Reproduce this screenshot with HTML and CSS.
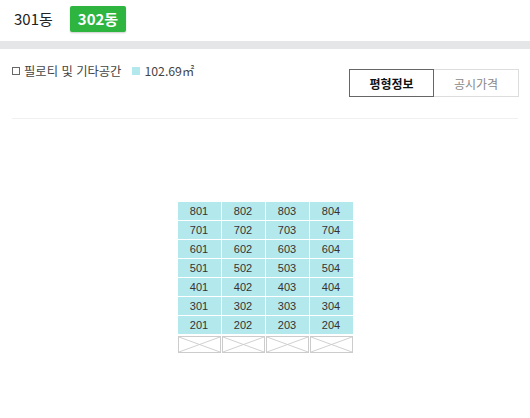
FILE: index.html
```html
<!DOCTYPE html>
<html lang="ko">
<head>
<meta charset="utf-8">
<link rel="stylesheet" href="styles.css">
</head>
<body>
<div class="tabs">
  <span class="tab">301동</span>
  <span class="tab active">302동</span>
</div>
<div class="sep"></div>
<div class="info">
  <div class="legend">
    <span class="chk"></span>
    <span class="ltxt">필로티 및 기타공간</span>
    <span class="sq"></span>
    <span class="ltxt">102.69㎡</span>
  </div>
  <div class="toggle">
    <button class="tbtn on">평형정보</button>
    <button class="tbtn">공시가격</button>
  </div>
</div>
<div class="line"></div>
<div class="chart">
  <div class="grid">
    <div class="c">801</div><div class="c">802</div><div class="c">803</div><div class="c">804</div>
    <div class="c">701</div><div class="c">702</div><div class="c">703</div><div class="c">704</div>
    <div class="c">601</div><div class="c">602</div><div class="c">603</div><div class="c">604</div>
    <div class="c">501</div><div class="c">502</div><div class="c">503</div><div class="c">504</div>
    <div class="c">401</div><div class="c">402</div><div class="c">403</div><div class="c">404</div>
    <div class="c">301</div><div class="c">302</div><div class="c">303</div><div class="c">304</div>
    <div class="c">201</div><div class="c">202</div><div class="c">203</div><div class="c">204</div>
    <div class="x"><svg viewBox="0 0 43 17" preserveAspectRatio="none"><path d="M0 0L43 17M43 0L0 17"/></svg></div>
    <div class="x"><svg viewBox="0 0 43 17" preserveAspectRatio="none"><path d="M0 0L43 17M43 0L0 17"/></svg></div>
    <div class="x"><svg viewBox="0 0 43 17" preserveAspectRatio="none"><path d="M0 0L43 17M43 0L0 17"/></svg></div>
    <div class="x"><svg viewBox="0 0 43 17" preserveAspectRatio="none"><path d="M0 0L43 17M43 0L0 17"/></svg></div>
  </div>
</div>
</body>
</html>
```
FILE: styles.css
```css
* { box-sizing: border-box; }
body {
  margin: 0;
  background: #fff;
  font-family: "Noto Sans CJK KR", "Noto Sans", sans-serif;
  color: #333;
}
.tabs {
  display: flex;
  align-items: center;
  gap: 17px;
  height: 41px;
  padding: 0 0 4px 14px;
}
.tab {
  font-size: 15px;
  line-height: 20px;
  color: #222;
}
.tab.active {
  background: #2db53f;
  color: #fff;
  font-weight: bold;
  padding: 3px 8px;
  border-radius: 2px;
  box-shadow: 0 1px 2px rgba(0,0,0,0.2);
}
.sep {
  height: 8px;
  background: #e5e6e7;
}
.info {
  display: flex;
  justify-content: space-between;
  align-items: flex-start;
  padding: 12px 11px 0 12px;
  height: 69px;
}
.legend {
  display: flex;
  align-items: center;
  gap: 4px;
  margin-top: 2px;
  font-size: 12.3px;
  line-height: 16px;
  color: #444;
}
.chk {
  width: 8px;
  height: 8px;
  border: 1px solid #666;
}
.sq {
  width: 8px;
  height: 8px;
  background: #b3e9ec;
  margin-left: 7px;
}
.toggle {
  display: flex;
  margin-top: 8px;
}
.tbtn {
  width: 85px;
  height: 28px;
  font-family: inherit;
  font-size: 12px;
  background: #fff;
  color: #888;
  border: 1px solid #ddd;
  padding: 0;
}
.tbtn.on {
  border-color: #666;
  color: #111;
  font-weight: bold;
}
.tbtn + .tbtn { border-left: none; }
.line {
  margin: 0 12px;
  height: 1px;
  background: #f0f0f0;
}
.chart {
  display: flex;
  justify-content: center;
  padding: 83px 0 0 0;
}
.grid {
  display: grid;
  grid-template-columns: repeat(4, 43px);
  grid-auto-rows: 18px;
  gap: 1px;
}
.c {
  background: #b3e9ec;
  font-family: "Liberation Sans", Arial, sans-serif;
  font-size: 11px;
  line-height: 18px;
  text-align: center;
  color: #333;
}
.x {
  border: 1px solid #ccc;
  margin-top: 1px;
}
.x svg {
  display: block;
  width: 100%;
  height: 100%;
}
.x path {
  stroke: #ccc;
  stroke-width: 1;
  fill: none;
}
```
